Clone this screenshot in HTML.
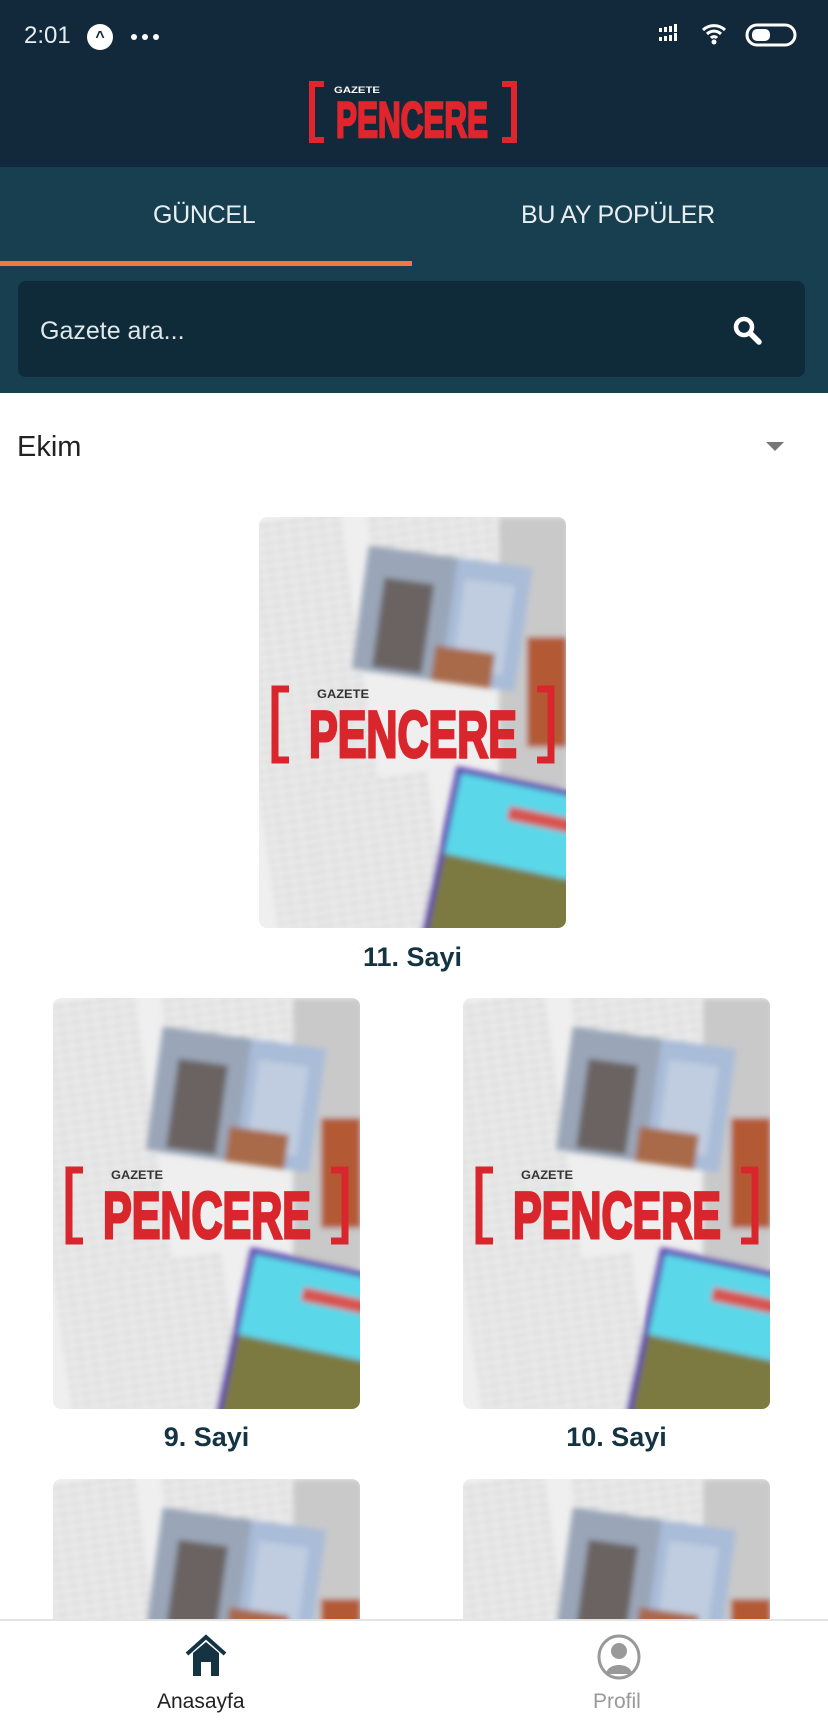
<!DOCTYPE html>
<html><head><meta charset="utf-8">
<style>
*{margin:0;padding:0;box-sizing:border-box}
html{width:828px;height:1722px;overflow:hidden}
body{width:828px;height:1722px;overflow:hidden;background:#fff;font-family:"Liberation Sans",sans-serif;position:relative}
.abs{position:absolute}
.top{left:0;top:0;width:828px;height:167px;background:#11293a}
.tabs{left:0;top:167px;width:828px;height:226px;background:#173f4f}
.tab{color:#e8eef0;font-size:25px;top:201px;letter-spacing:-0.3px}
.search{left:18px;top:281px;width:787px;height:96px;background:#0f2a39;border-radius:8px}
.cover{width:307px;height:411px;border-radius:8px;overflow:hidden}
.cover svg{display:block}
.lbl{font-weight:bold;font-size:27px;color:#143443;text-align:center;width:307px}
.dot{width:6px;height:6px;border-radius:50%;background:#fff;top:34px}
</style></head><body>
<svg width="0" height="0" style="position:absolute;top:0;left:0">
<defs>
<filter id="bl"><feGaussianBlur stdDeviation="3"/></filter>
<pattern id="txt" width="14" height="9" patternUnits="userSpaceOnUse"><rect width="14" height="9" fill="#ececec"/><rect y="3" width="11" height="3" fill="#d2d2d2"/></pattern>
<g id="cv">
<rect width="307" height="411" fill="#efefef"/>
<g filter="url(#bl)">
<rect x="-10" y="0" width="120" height="411" fill="url(#txt)" transform="rotate(-8 50 200)"/>
<rect x="110" y="-10" width="130" height="60" fill="url(#txt)" transform="rotate(-8 170 20)"/>
<rect x="60" y="260" width="120" height="160" fill="url(#txt)" transform="rotate(-8 120 340)"/>
<rect x="240" y="0" width="70" height="270" fill="#c9c9c9"/>
<rect x="268" y="120" width="40" height="110" fill="#b35a35"/>
<g transform="rotate(8 190 105)">
<rect x="100" y="40" width="165" height="125" fill="#a9bcd8"/>
<rect x="100" y="40" width="90" height="125" fill="#9aa6b8"/>
<rect x="120" y="70" width="50" height="90" fill="#6a6462"/>
<rect x="200" y="60" width="50" height="90" fill="#c0cde0"/>
<rect x="180" y="130" width="60" height="35" fill="#a86a4a"/>
</g>
<g transform="rotate(12 250 340)">
<rect x="180" y="262" width="160" height="170" fill="#5b3fb0"/>
<rect x="186" y="268" width="150" height="82" fill="#5ad8ea"/>
<rect x="186" y="350" width="150" height="80" fill="#7b7a40"/>
<rect x="240" y="290" width="70" height="14" fill="#d9534f"/>
</g>
</g>
<path d="M30 172 H16 V243 H30" fill="none" stroke="#d8262c" stroke-width="7"/>
<path d="M278 172 H292 V243 H278" fill="none" stroke="#d8262c" stroke-width="7"/>
<text x="58" y="181" font-family="Liberation Sans" font-weight="bold" font-size="12" fill="#333" textLength="52" lengthAdjust="spacingAndGlyphs">GAZETE</text>
<text x="50" y="240" font-family="Liberation Sans" font-weight="bold" font-size="66" fill="#d8262c" stroke="#d8262c" stroke-width="3" textLength="208" lengthAdjust="spacingAndGlyphs">PENCERE</text>
</g>
</defs></svg>

<div class="abs top"></div>
<div class="abs" style="left:24px;top:22px;color:#e6eef0;font-size:24px">2:01</div>
<div class="abs" style="left:87px;top:24px;width:26px;height:26px;border-radius:50%;background:#fff;color:#11293a;font-size:16px;font-weight:bold;text-align:center;line-height:28px">^</div>
<div class="abs dot" style="left:131px"></div><div class="abs dot" style="left:142px"></div><div class="abs dot" style="left:153px"></div>
<svg class="abs" style="left:655px;top:20px" width="160" height="30">
<g fill="#fff"><rect x="4" y="8" width="3" height="4"/><rect x="9" y="7" width="3" height="5"/><rect x="14" y="6" width="3" height="6"/><rect x="19" y="4" width="3" height="8"/><rect x="4" y="17" width="3" height="4"/><rect x="9" y="16" width="3" height="5"/><rect x="14" y="15" width="3" height="6"/><rect x="19" y="13" width="3" height="8"/></g>
<path d="M48 10 a16 16 0 0 1 22 0 M52 14 a10 10 0 0 1 14 0 M56 18 a4 4 0 0 1 6 0" fill="none" stroke="#fff" stroke-width="3"/>
<circle cx="59" cy="22" r="2.5" fill="#fff"/>
<rect x="92" y="5" width="48" height="20" rx="10" fill="none" stroke="#fff" stroke-width="3"/>
<rect x="97" y="9" width="18" height="12" rx="5" fill="#fff"/>
</svg>
<svg class="abs" style="left:300px;top:78px" width="230" height="70">
<path d="M24 6 H12 V62 H24" fill="none" stroke="#e0262c" stroke-width="6"/>
<path d="M202 6 H214 V62 H202" fill="none" stroke="#e0262c" stroke-width="6"/>
<text x="34" y="15" font-family="Liberation Sans" font-weight="bold" font-size="9" fill="#fff" textLength="46" lengthAdjust="spacingAndGlyphs">GAZETE</text>
<text x="36" y="59" font-family="Liberation Sans" font-weight="bold" font-size="50" fill="#e0262c" stroke="#e0262c" stroke-width="2.5" textLength="152" lengthAdjust="spacingAndGlyphs">PENCERE</text>
</svg>

<div class="abs tabs"></div>
<div class="abs tab" style="left:153px">GÜNCEL</div>
<div class="abs tab" style="left:521px">BU AY POPÜLER</div>
<div class="abs" style="left:0;top:261px;width:412px;height:5px;background:#f07843"></div>
<div class="abs search"></div>
<div class="abs" style="left:40px;top:317px;color:#dfe8ea;font-size:25px">Gazete ara...</div>
<svg class="abs" style="left:730px;top:313px" width="36" height="36"><circle cx="14" cy="14" r="8" fill="none" stroke="#fff" stroke-width="4.5"/><path d="M20 20 L29 29" stroke="#fff" stroke-width="5.5" stroke-linecap="round"/></svg>

<div class="abs" style="left:17px;top:431px;color:#222;font-size:29px">Ekim</div>
<div class="abs" style="left:766px;top:442px;width:0;height:0;border-left:9px solid transparent;border-right:9px solid transparent;border-top:9px solid #777"></div>

<div class="abs cover" style="left:259px;top:517px"><svg width="307" height="411"><use href="#cv"/></svg></div>
<div class="abs lbl" style="left:259px;top:942px">11. Sayi</div>
<div class="abs cover" style="left:53px;top:998px"><svg width="307" height="411"><use href="#cv"/></svg></div>
<div class="abs lbl" style="left:53px;top:1422px">9. Sayi</div>
<div class="abs cover" style="left:463px;top:998px"><svg width="307" height="411"><use href="#cv"/></svg></div>
<div class="abs lbl" style="left:463px;top:1422px">10. Sayi</div>
<div class="abs cover" style="left:53px;top:1479px;height:141px;border-radius:8px 8px 0 0"><svg width="307" height="141" viewBox="0 0 307 141"><use href="#cv"/></svg></div>
<div class="abs cover" style="left:463px;top:1479px;height:141px;border-radius:8px 8px 0 0"><svg width="307" height="141" viewBox="0 0 307 141"><use href="#cv"/></svg></div>

<div class="abs" style="left:0;top:1619px;width:828px;height:103px;background:#fff;border-top:2px solid #e4e4e4"></div>
<svg class="abs" style="left:183px;top:1634px" width="46" height="44"><path d="M4 20 L23 3 L42 20" fill="none" stroke="#143443" stroke-width="4"/><path d="M10 19 L23 8 L36 19 V42 H28 V28 H18 V42 H10 Z" fill="#143443"/></svg>
<div class="abs" style="left:157px;top:1690px;font-size:21px;color:#222">Anasayfa</div>
<svg class="abs" style="left:597px;top:1634px" width="44" height="46"><ellipse cx="22" cy="23" rx="20" ry="21" fill="none" stroke="#999" stroke-width="3"/><circle cx="22" cy="17" r="8" fill="#999"/><path d="M9 40 C10 28 34 28 35 40 Z" fill="#999"/></svg>
<div class="abs" style="left:593px;top:1690px;font-size:21px;color:#999">Profil</div>
</body></html>
